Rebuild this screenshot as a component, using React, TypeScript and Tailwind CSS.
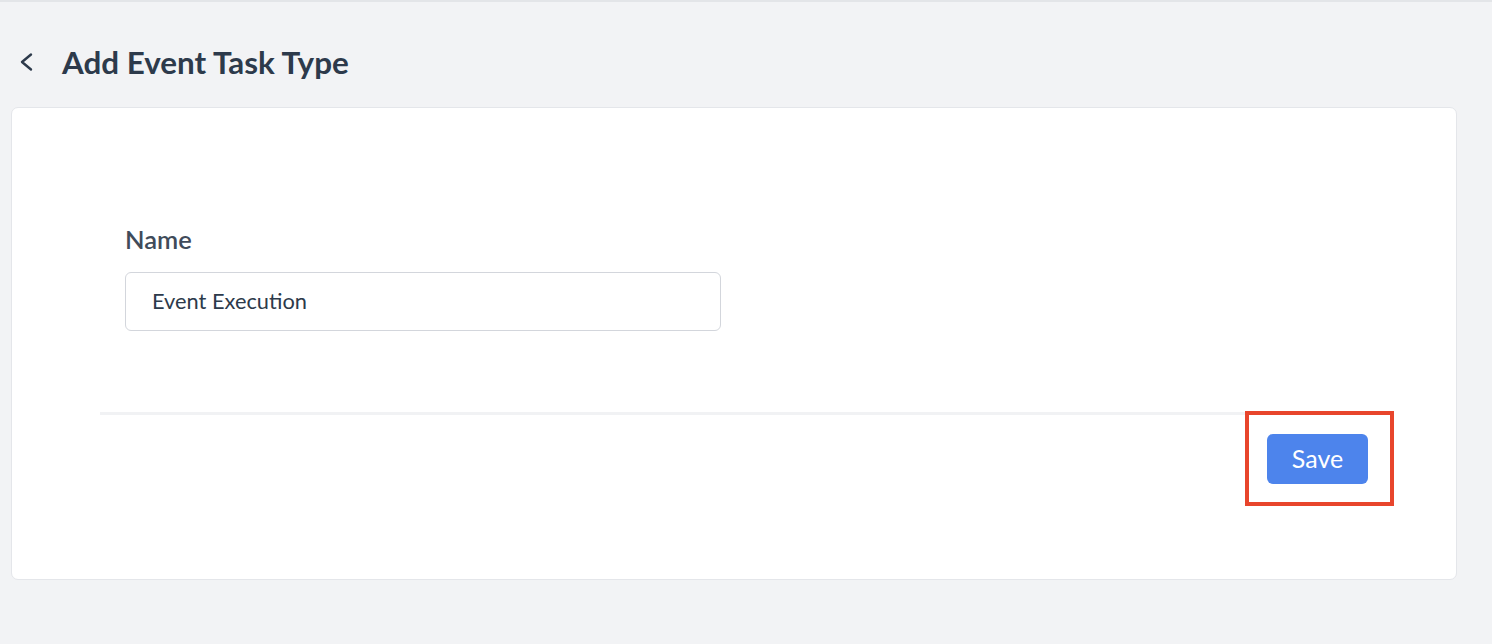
export default function App() {
  return (
    <div className="min-h-[644px] bg-[#f2f3f5] border-t-2 border-[#e3e5e8] font-['Lato','Noto_Sans',sans-serif]">
      <div className="flex items-center pt-[41px] pl-[19px]">
        <svg width="14" height="20" viewBox="0 0 14 20" className="text-[#2d3a4b]">
          <path d="M12 2.5 3 10l9 7.5" fill="none" stroke="currentColor" strokeWidth="2.4" strokeLinecap="round" strokeLinejoin="round" />
        </svg>
        <h1 className="ml-[29px] text-[31.4px] leading-[38px] font-bold text-[#2d3a4b]">
          Add Event Task Type
        </h1>
      </div>

      <div className="mt-[26px] ml-[11px] w-[1446px] h-[473px] bg-white border border-[#e4e6ea] rounded-[7px]">
        <div className="ml-[88px] mr-[63px]">
          <div className="pt-[117px] px-[25px]">
            <label className="block text-[25.5px] leading-[29px] font-semibold text-[#404b5a]">Name</label>
            <div className="mt-[18px] w-[596px] h-[59px] flex items-center px-[26px] border border-[#d3d6dc] rounded-[6px] text-[21.8px] text-[#2d3a4b]">
              Event Execution
            </div>
          </div>
          <div className="mt-[81px] h-[3px] bg-[#f1f2f4]" />
          <div className="flex justify-end px-[25px] pt-[19px]">
            <div className="relative">
              <button className="w-[101px] h-[50px] rounded-[6px] bg-[#4d84ec] text-white text-[25px]">
                Save
              </button>
              <div className="absolute -left-[22px] -top-[23px] w-[149px] h-[95px] border-[4px] border-[#e8452c] pointer-events-none" />
            </div>
          </div>
        </div>
      </div>
    </div>
  );
}
